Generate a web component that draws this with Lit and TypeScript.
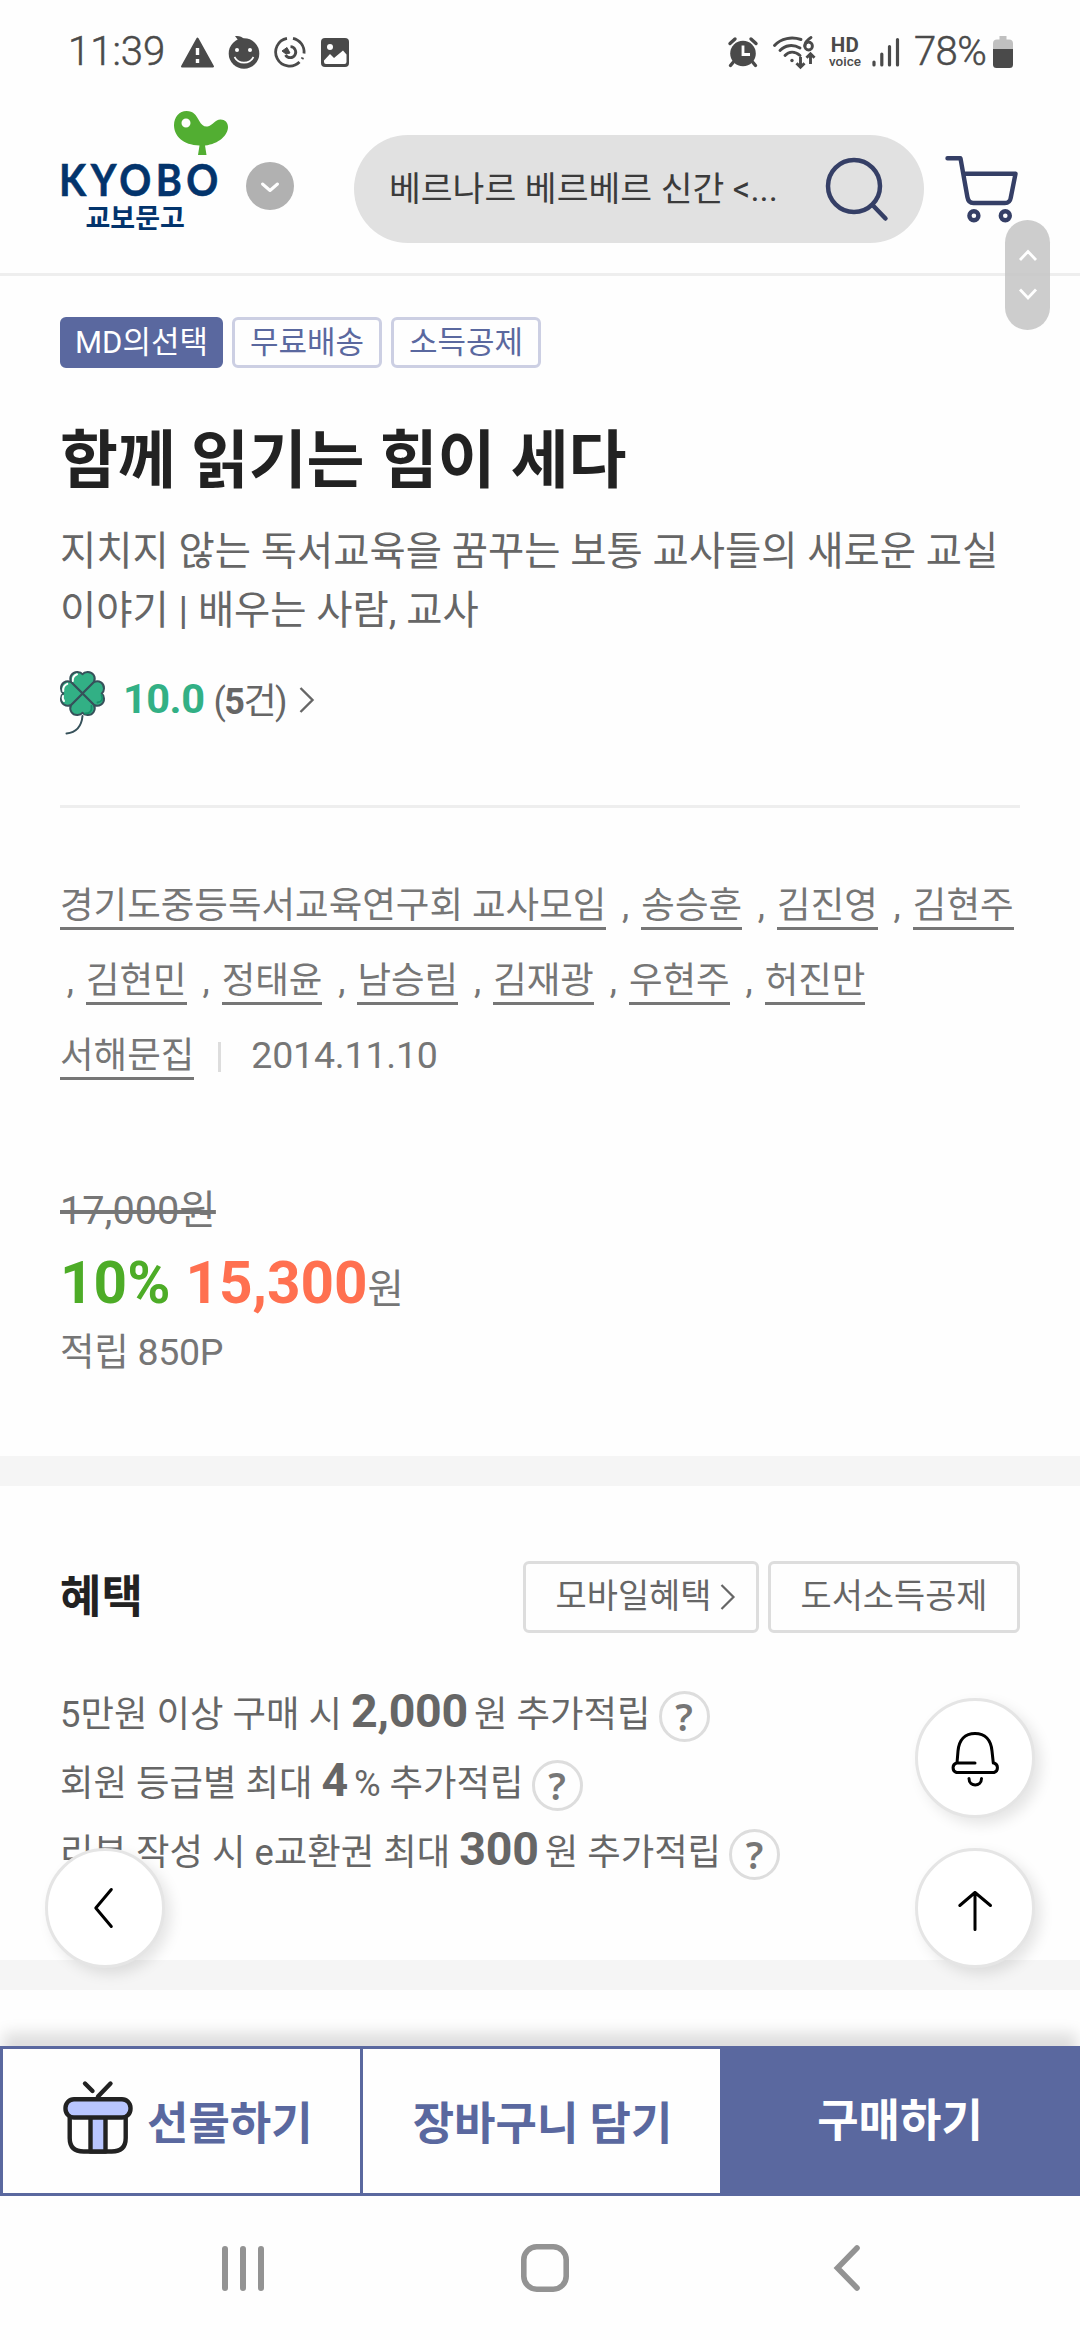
import { LitElement, html, css, svg } from "lit";
import { customElement } from "lit/decorators.js";

const authors = ["경기도중등독서교육연구회 교사모임", "송승훈", "김진영", "김현주", "김현민", "정태윤", "남승림", "김재광", "우현주", "허진만"];

const benefits = [
  { before: "5만원 이상 구매 시 ", value: "2,000", after: "원 추가적립" },
  { before: "회원 등급별 최대 ", value: "4", after: "% 추가적립" },
  { before: "리뷰 작성 시 e교환권 최대 ", value: "300", after: "원 추가적립" },
];

const base = css`
  * { box-sizing: border-box; }
  svg { display: block; flex: none; overflow: visible; }
`;

@customElement("status-bar")
export class StatusBar extends LitElement {
  static styles = [base, css`
    :host { display: flex; align-items: center; height: 104px; padding: 0 67px 0 68px; color: #4a4a4a; font-size: 40px; line-height: 104px; }
    .clock { width: 113px; font-weight: 300; -webkit-text-stroke: 0.5px #4a4a4a; }
    .left { display: flex; align-items: center; gap: 14px; }
    .right { display: flex; align-items: center; margin-left: auto; }
    .wifi { margin-left: 15px; }
    .hd { display: flex; flex-direction: column; align-items: center; width: 32px; margin-left: 14px; padding-top: 2px; }
    .hd b { font-size: 20.500px; line-height: 16px; letter-spacing: 0.4px; }
    .hd span { font-size: 13.500px; line-height: 17px; font-weight: 500; }
    .signal { margin-left: 11px; }
    .percent { margin: 0 6px 0 14px; width: 73px; letter-spacing: -0.6px; font-weight: 300; -webkit-text-stroke: 0.5px #4a4a4a; }
  `];
  render() {
    return html`
      <div class="clock">11:39</div>
      <div class="left">
        <svg width="33" height="31" viewBox="0 0 33 31"><path d="M16.5 1.5 32 29.5H1Z" fill="#4a4a4a" stroke="#4a4a4a" stroke-width="2" stroke-linejoin="round"/><path d="M16.5 11v7M16.5 22v4" stroke="#fff" stroke-width="3.4"/></svg>
        <svg width="32" height="34" viewBox="0 0 32 34"><circle cx="16" cy="18.5" r="15.3" fill="#4a4a4a"/><path d="M7 1c4-.5 7 .5 9 3l-6 1Z" fill="#4a4a4a"/><circle cx="9" cy="15" r="2" fill="#fff"/><circle cx="22" cy="15" r="2" fill="#fff"/><path d="M6.500 22c4 7.500 15 7.500 19 0" fill="none" stroke="#fff" stroke-width="1.6"/></svg>
        <svg width="32" height="32" viewBox="0 0 32 32" fill="none" stroke="#4a4a4a" stroke-width="2.800"><path d="M13 2.300A14 14 0 1 0 25.500 26M19 2.300A14 14 0 0 1 30 17.500M28.800 21.500A14 14 0 0 1 28 23"/><path d="M11.500 19a5.500 5.500 0 1 0 5-8.300"/><path d="m8 15 5-3.500 3 5.500-4 1Z" fill="#4a4a4a" stroke-width="1"/></svg>
        <svg width="30" height="30" viewBox="0 0 30 30"><rect x="1" y="1" width="28" height="29" rx="4" fill="#4a4a4a"/><path d="M4 23.500 10 17l4 4 9-7.500 3.500 4V25a2 2 0 0 1-2 2H6a2 2 0 0 1-2-2Z" fill="#fff"/><circle cx="10" cy="10" r="3" fill="#fff"/></svg>
      </div>
      <div class="right">
        <svg width="30" height="30" viewBox="0 0 30 30"><circle cx="15" cy="16.500" r="12.800" fill="#4a4a4a"/><path d="M5 25.500 2.500 28.500M25 25.500l2.500 3M2 6.500 7 2M28 6.500 23 2" stroke="#4a4a4a" stroke-width="3.4" stroke-linecap="round"/><path d="M15 8.500v9h7" fill="none" stroke="#fff" stroke-width="2.8"/></svg>
        <svg class="wifi" width="42" height="32" viewBox="0 0 42 32" fill="none" stroke="#4a4a4a" stroke-width="2.900" stroke-linecap="round"><path d="M1.500 9.500C8 2 19 .5 28 3.500M7 14.500c5-5.500 13-6.500 20-2.500M12 19.500c4-4.500 10-4.500 15 0"/><circle cx="19" cy="24.500" r="1.700" fill="#4a4a4a" stroke="none"/><path d="M38 1.500c-4 2.500-6.200 5-6.200 8.500"/><ellipse cx="35.600" cy="10" rx="3.800" ry="4"/><path d="M27.500 21v10M23.500 27.300l4 4 4-4M37.500 28V18M33.500 21.700l4-4 4 4" stroke-linecap="butt"/></svg>
        <div class="hd"><b>HD</b><span>voice</span></div>
        <svg class="signal" width="28" height="30" viewBox="0 0 28 30" stroke="#4a4a4a" stroke-width="3.200" stroke-linecap="round"><path d="M2 25v3M9.800 17v11M17.500 9.500V28M25.500 2.500V28"/></svg>
        <div class="percent">78%</div>
        <svg width="20" height="32" viewBox="0 0 20 32"><path d="M6.500 0h7v3.500H16a4 4 0 0 1 4 4V14H0V7.500a4 4 0 0 1 4-4h2.500Z" fill="#c0c0c0"/><path d="M0 13h20v15.500a3.500 3.500 0 0 1-3.500 3.500h-13A3.500 3.500 0 0 1 0 28.500Z" fill="#4a4a4a"/></svg>
      </div>`;
  }
}

@customElement("shop-header")
export class ShopHeader extends LitElement {
  static styles = [base, css`
    :host { display: flex; align-items: center; height: 172px; padding-left: 60px; border-bottom: 3px solid #eee; }
    .logo { align-self: flex-start; width: 168px; padding-top: 7px; color: #03346c; white-space: nowrap; }
    .bird { margin-left: 114px; }
    .latin { font: 700 44px/48px Lato, sans-serif; letter-spacing: 5px; margin-left: -1px; transform: scaleX(0.9); transform-origin: 0 50%; -webkit-text-stroke: 0.6px #03346c; }
    .korean { font-size: 27px; font-weight: 700; line-height: 32px; padding-left: 25.500px; }
    .arrow { margin: -5px 60px 0 18px; }
    .search { display: flex; align-items: center; width: 570px; height: 108px; border-radius: 54px; background: #e1e1e1; padding: 0 36px 0 35px; color: #3b3b3b; font-size: 34.6px; line-height: 50px; }
    .term { flex: 1; white-space: nowrap; }
    .cart { margin-left: 21px; }
  `];
  render() {
    return html`
      <div class="logo">
        <svg class="bird" width="54" height="44" viewBox="0 0 54 44"><path fill="#52ae32" fill-rule="evenodd" d="M0 14C0 6 5.500 0 12.500 0S22 4 25 9.500c2.500 4.500 5 6.500 8.500 6 5-.8 7.500-7 13-7 4.500 0 7.500 3 7.500 7.500 0 8-9 17-23 18.500L32.500 44H24l1.500-9.500C9 34 0 25 0 14Zm12-6.500a4.500 4.500 0 1 0 0 9 4.500 4.500 0 0 0 0-9Z"/></svg>
        <div class="latin">KYOBO</div>
        <div class="korean">교보문고</div>
      </div>
      <svg class="arrow" width="48" height="48" viewBox="0 0 48 48"><circle cx="24" cy="24" r="24" fill="#b1b1b1"/><path d="m16.500 22 7.500 6.500 7.500-6.500" fill="none" stroke="#fff" stroke-width="3" stroke-linecap="round" stroke-linejoin="round"/></svg>
      <div class="search">
        <div class="term">베르나르 베르베르 신간 &lt;...</div>
        <svg width="64" height="64" viewBox="0 0 64 64" fill="none" stroke="#353f66" stroke-width="4.500" stroke-linecap="round"><circle cx="30" cy="29" r="26"/><path d="M49 48.500 61.500 61.500"/></svg>
      </div>
      <svg class="cart" width="73" height="68" viewBox="945 155 73 68" fill="none" stroke="#353f66" stroke-width="4.400" stroke-linecap="round" stroke-linejoin="round"><path d="M947.500 158.300h13l6.900 38.700q1 6 6 6h31.500q5 0 5.800-5l4.800-24.300H963.500"/><circle cx="973.900" cy="215.700" r="4.500"/><circle cx="1005.300" cy="215.700" r="4.500"/></svg>`;
  }
}

@customElement("book-summary")
export class BookSummary extends LitElement {
  static styles = [base, css`
    :host { display: block; padding: 41px 60px 74px; color: #767676; }
    .tags { display: flex; gap: 9px; }
    .tag { height: 51px; border: 3px solid #cccfe3; border-radius: 6px; line-height: 45px; font-size: 31px; color: #5a689f; text-align: center; width: 150px; white-space: nowrap; }
    .tag.filled { background: #5a689f; border-color: #5a689f; color: #fff; width: 163px; }
    h1 { margin: 55px 0 23px; font-size: 63px; line-height: 76px; font-weight: 700; color: #222; letter-spacing: -0.2px; }
    .subtitle { margin: 0 -20px 0 0; font-size: 39.400px; line-height: 59px; color: #666; }
    .rating { display: flex; align-items: center; height: 65px; margin-top: 30px; color: #666; }
    .score { margin: -8px 0 0 17px; font-size: 41.5px; font-weight: 700; color: #32b085; letter-spacing: -0.5px; line-height: 60px; }
    .count { margin: -2px 13px 0 9px; font-size: 36px; letter-spacing: -1.500px; line-height: 60px; }
    .more { margin-top: -6px; }
    .people { margin-top: 70px; padding-top: 60px; border-top: 3px solid #eee; font-size: 36.500px; line-height: 75px; color: #767676; }
    .link { border-bottom: 3px solid #767676; }
    .comma { margin: 0 3px 0 6.700px; }
    .issue { display: flex; align-items: center; height: 75px; }
    .bar { width: 3px; height: 30px; margin: 3px 30px 0 24px; background: #ddd; }
    .date { font-size: 37.500px; letter-spacing: -0.2px; }
    .list-price { width: max-content; margin-top: 88px; font-size: 39.7px; line-height: 60px; text-decoration: line-through; text-decoration-thickness: 4px; }
    .sale { margin-top: 5px; height: 76px; line-height: 76px; font-size: 39.500px; white-space: nowrap; padding-top: 6px; }
    .sale b { font-size: 58.500px; line-height: 1; }
    .rate { color: #4dac27; margin-right: 15px; }
    .amount { color: #ff7050; }
    .points { font-size: 37.500px; line-height: 60px; letter-spacing: -0.3px; }
  `];
  render() {
    return html`
      <div class="tags"><span class="tag filled">MD의선택</span><span class="tag">무료배송</span><span class="tag">소득공제</span></div>
      <h1>함께 읽기는 힘이 세다</h1>
      <p class="subtitle">지치지 않는 독서교육을 꿈꾸는 보통 교사들의 새로운 교실<br>이야기 | 배우는 사람, 교사</p>
      <div class="rating">
        <svg width="46" height="65" viewBox="0 0 46 65">
          ${[0, 90, 180, 270].map(a => svg`<g transform="rotate(${a} 22.500 23.500)"><path d="M22.500 23.500 11 12C8.800 7 12 1.800 17.500 2q3.500.1 5 2.300Q24 2.100 27.500 2C33 1.800 36.200 7 34 12Z" fill="#32b085" stroke="#36515a" stroke-width="2" stroke-linejoin="round"/></g>`)}
          <path d="M12.800 11q-.5-5 4.200-6.700M3.300 21q-.8-5 4-7.200M4 31q-2-2-1-5" fill="none" stroke="#fff" stroke-width="2" stroke-linecap="round"/>
          <path d="M41.500 25q2.500 6.500-4 7.500M31.500 36q1 7.500-6.500 7.500" fill="none" stroke="#16906a" stroke-width="1.800" stroke-linecap="round"/>
          <path d="M22.500 46Q21 62 6.500 63.500" fill="none" stroke="#36515a" stroke-width="2" stroke-linecap="round"/>
        </svg>
        <span class="score">10.0</span><span class="count">(<b>5</b>건)</span>
        <svg class="more" width="15" height="26" viewBox="0 0 15 26"><path d="M1.500 1 13.500 13 1.500 25" fill="none" stroke="#666" stroke-width="2.400"/></svg>
      </div>
      <div class="people">
        ${authors.map((name, i) => html`${i ? html` <span class="comma">,</span> ` : ""}<span class="link">${name}</span>`)}
        <div class="issue"><div><span class="link">서해문집</span></div><span class="bar"></span><span class="date">2014.11.10</span></div>
      </div>
      <div class="list-price">17,000원</div>
      <div class="sale"><b class="rate">10%</b><b class="amount">15,300</b>원</div>
      <div class="points">적립 850P</div>`;
  }
}

@customElement("book-benefits")
export class BookBenefits extends LitElement {
  static styles = [base, css`
    :host { display: block; padding: 75px 60px 74px; color: #666; }
    .head { display: flex; align-items: center; gap: 9px; height: 72px; margin-bottom: 46px; }
    h2 { flex: 1; margin: 2px 0 0; font-size: 45px; line-height: 72px; color: #222; }
    .button { display: flex; align-items: center; justify-content: center; width: 252px; height: 72px; border: 3px solid #ddd; border-radius: 6px; font-size: 33.9px; line-height: 60px; white-space: nowrap; }
    .button.mobile { width: 236px; padding-left: 9px; }
    .button svg { margin: 0 0 0 9px; }
    .row { display: flex; align-items: center; height: 69px; font-size: 36.400px; line-height: 69px; white-space: nowrap; }
    .text { white-space: pre; padding-top: 1px; }
    b { font-size: 46.500px; line-height: 1; margin-right: 6px; letter-spacing: -0.2px; }
    .help { display: flex; align-items: center; justify-content: center; width: 51px; height: 51px; margin: 6px 0 0 8px; border: 3px solid #ddd; border-radius: 50%; font: 600 38px/45px "Noto Sans", sans-serif; color: #767676; }
  `];
  render() {
    return html`
      <div class="head"><h2>혜택</h2>
        <div class="button mobile">모바일혜택<svg width="15" height="26" viewBox="0 0 15 26"><path d="M1.500 1 13.500 13 1.500 25" fill="none" stroke="#666" stroke-width="2.200"/></svg></div>
        <div class="button">도서소득공제</div>
      </div>
      ${benefits.map(b => html`<div class="row"><span class="text">${b.before}<b>${b.value}</b>${b.after}</span><span class="help">?</span></div>`)}`;
  }
}

@customElement("purchase-bar")
export class PurchaseBar extends LitElement {
  static styles = [base, css`
    :host { display: grid; grid-template-columns: 360px 357px 357px; height: 150px; border: 3px solid #5a689f; width: 1080px; box-sizing: border-box; background: #fefefe; color: #5a689f; font-size: 45px; font-weight: 700; line-height: 60px; box-shadow: 0 -16px 14px -3px rgba(0, 0, 0, 0.13); }
    .item { display: flex; align-items: center; justify-content: center; white-space: nowrap; }
    .gift { justify-content: flex-start; padding: 8px 0 0 60px; border-right: 3px solid #5a689f; }
    .gift svg { margin: -14px 14px 0 0; }
    .basket { padding: 8px 0 0 2px; }
    .buy { background: #5a689f; color: #fff; padding: 2px 0 0 3px; }
  `];
  render() {
    return html`
      <div class="item gift"><svg width="70" height="74" viewBox="0 0 70 74" fill="none" stroke="#222" stroke-width="4.400" stroke-linecap="round" stroke-linejoin="round"><path d="M6.700 36v21q0 13.500 14 13.500h28q14 0 14-13.500V36"/><path d="M27.500 36v34.500h15V36" fill="#b9c6ff"/><rect x="2.500" y="18.300" width="65" height="18.200" rx="8.500" fill="#b9c6ff"/><path d="M22 2.500 29.500 10M47.500 2.500 35 15.500"/></svg>선물하기</div>
      <div class="item basket">장바구니 담기</div>
      <div class="item buy">구매하기</div>`;
  }
}

@customElement("app-root")
export class AppRoot extends LitElement {
  static styles = [base, css`
    :host { display: block; position: relative; width: 1080px; height: 2340px; overflow: hidden; background: #fefefe; font-family: Roboto, "Noto Sans CJK KR", sans-serif; }
    .band { height: 30px; background: #f5f5f5; }
    .gap { height: 56px; }
    .system { display: flex; align-items: center; height: 144px; padding-left: 222px; }
    .home { margin: 0 265px 0 257px; }
    .scroller { position: absolute; left: 1005px; top: 220px; }
    .fab { position: absolute; width: 120px; height: 120px; border: 3px solid #e5e5e5; border-radius: 50%; background: #fff; box-shadow: 6px 6px 14px rgba(0, 0, 0, 0.1); }
    .fab svg { position: absolute; left: -3px; top: -3px; }
    .prev { left: 45px; top: 1848px; }
    .alarm { left: 915px; top: 1698px; }
    .top { left: 915px; top: 1848px; }
    purchase-bar { position: relative; }
  `];
  render() {
    return html`
      <status-bar></status-bar>
      <shop-header></shop-header>
      <book-summary></book-summary>
      <div class="band"></div>
      <book-benefits></book-benefits>
      <div class="band"></div>
      <div class="gap"></div>
      <purchase-bar></purchase-bar>
      <div class="system">
        <svg width="42" height="45" viewBox="0 0 42 45" stroke="#939393" stroke-width="6" stroke-linecap="round"><path d="M3 3v39M21 3v39M39 3v39"/></svg>
        <svg class="home" width="48" height="48" viewBox="0 0 48 48"><rect x="2.800" y="2.800" width="42.400" height="42.400" rx="13" fill="none" stroke="#939393" stroke-width="5.600"/></svg>
        <svg width="26" height="46" viewBox="0 0 26 46"><path d="M23 3 3.500 23 23 43" fill="none" stroke="#939393" stroke-width="5.600" stroke-linecap="round"/></svg>
      </div>
      <svg class="scroller" width="45" height="110" viewBox="0 0 45 110"><rect width="45" height="110" rx="22.500" fill="#c4c4c4" fill-opacity=".85"/><path d="m15 40 8-8.500 8 8.500M15 69.500l8 8.500 8-8.500" fill="none" stroke="#fff" stroke-width="2.800"/></svg>
      <div class="fab prev"><svg width="120" height="120" viewBox="45 1848 120 120" fill="none" stroke="#000" stroke-width="3" stroke-linecap="round" stroke-linejoin="round"><path d="M111.300 1889.500 95.800 1908l15.500 18.500"/></svg></div>
      <div class="fab alarm"><svg width="120" height="120" viewBox="915 1698 120 120" fill="none" stroke="#000" stroke-width="3" stroke-linecap="round" stroke-linejoin="round"><path d="M975 1763h-18.500a5 5 0 0 0 0 9.500h37.500a5 5 0 0 0 0-9.500h-.7l-1.300-12c-1-11-7-17.500-17-17.500s-16 6.500-17 17.500l-1 12M969 1778.500c0 8.500 12.500 8.500 12.500 0"/></svg></div>
      <div class="fab top"><svg width="120" height="120" viewBox="915 1848 120 120" fill="none" stroke="#000" stroke-width="3" stroke-linecap="round" stroke-linejoin="round"><path d="M975 1929.500V1892.500M959.800 1905.500 975 1892.500l15.500 13"/></svg></div>`;
  }
}
